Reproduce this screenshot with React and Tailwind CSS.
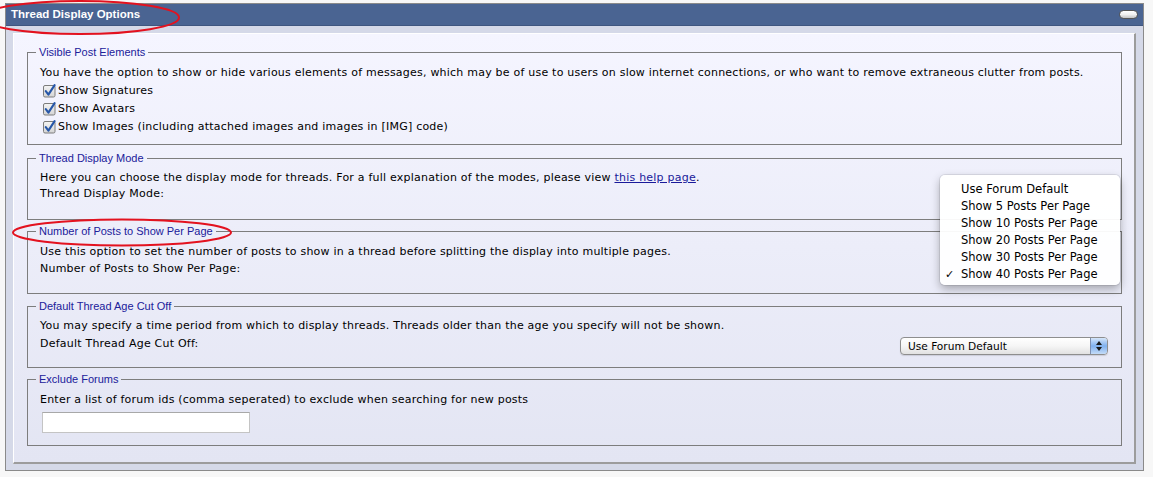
import React from "react";

const Checkbox = () => (
  <svg width="14" height="14" viewBox="0 0 14 14" className="shrink-0">
    <defs>
      <linearGradient id="cbg" x1="0" y1="0" x2="0" y2="1">
        <stop offset="0" stopColor="#f4f4f4" />
        <stop offset="1" stopColor="#d4d4d4" />
      </linearGradient>
    </defs>
    <rect x="0.5" y="1.5" width="11.5" height="11.5" rx="1.5" fill="url(#cbg)" stroke="#7c7c7c" />
    <path d="M2.8 7.2 L5.4 10.6 L11.6 1.2" fill="none" stroke="#2656a8" strokeWidth="2.1" strokeLinecap="round" strokeLinejoin="round" />
  </svg>
);

const Fieldset = ({ legend, className, children }) => (
  <fieldset className={`border border-[#7d7d7d] ${className}`}>
    <legend className="ml-[8px] px-[3px] text-[11px] leading-[13px] tracking-normal text-[#20209a] font-['Liberation_Sans',Arial,sans-serif]">
      {legend}
    </legend>
    <div className="px-[12px]">{children}</div>
  </fieldset>
);

const Row = ({ children }) => (
  <div className="flex items-center h-[18px] pl-[3px] gap-[1px]">
    <Checkbox />
    <span>{children}</span>
  </div>
);

const menuItems = [
  "Use Forum Default",
  "Show 5 Posts Per Page",
  "Show 10 Posts Per Page",
  "Show 20 Posts Per Page",
  "Show 30 Posts Per Page",
  "Show 40 Posts Per Page",
];

export default function App() {
  return (
    <div className="w-[1153px] h-[477px] bg-[#f7f7f7] relative overflow-hidden pt-[3px] pl-[5px] font-['DejaVu_Sans',Verdana,sans-serif] text-[11px] tracking-[0.22px] text-black">
      <div className="w-[1139px] h-[468px] border border-[#8a8a8a] bg-[#d5d9e8] flex flex-col">
        {/* header */}
        <div className="h-[22px] shrink-0 bg-[#4a6492] border-b border-[#3f5680] flex items-center justify-between pl-[5px] pr-[5px]">
          <span className="text-white font-bold text-[11.5px] tracking-normal font-['Liberation_Sans',Arial,sans-serif]">
            Thread Display Options
          </span>
          <div className="w-[19px] h-[9px] rounded-full border border-[#555] bg-gradient-to-b from-white via-[#f0f0f0] to-[#c4c4c4]" />
        </div>
        {/* body */}
        <div className="flex-1 pt-[7px] px-[7px] pb-[6px]">
          <div className="h-full border-t border-l border-white border-r-2 border-b-2 border-r-[#9c9c9c] border-b-[#9c9c9c] bg-gradient-to-b from-[#f5f5ff] to-[#e3e5f3] pt-[12px] pl-[13px] pr-[12px]">
            <Fieldset legend="Visible Post Elements" className="h-[99px]">
              <div className="pt-[5px] leading-[18px]">
                You have the option to show or hide various elements of messages, which may be of use to users on slow internet connections, or who want to remove extraneous clutter from posts.
              </div>
              <Row>Show Signatures</Row>
              <Row>Show Avatars</Row>
              <Row>Show Images (including attached images and images in [IMG] code)</Row>
            </Fieldset>

            <Fieldset legend="Thread Display Mode" className="h-[68px] mt-[7px]">
              <div className="pt-[5px] leading-[16px]">
                Here you can choose the display mode for threads. For a full explanation of the modes, please view{" "}
                <a href="#" className="text-[#1a1a9a] underline">this help page</a>.
              </div>
              <div className="leading-[16px]">Thread Display Mode:</div>
            </Fieldset>

            <Fieldset legend="Number of Posts to Show Per Page" className="h-[69px] mt-[5px]">
              <div className="pt-[6px] leading-[16px]">
                Use this option to set the number of posts to show in a thread before splitting the display into multiple pages.
              </div>
              <div className="leading-[16px] pt-[1px]">Number of Posts to Show Per Page:</div>
            </Fieldset>

            <Fieldset legend="Default Thread Age Cut Off" className="h-[68px] mt-[6px]">
              <div className="pt-[5px] leading-[16px]">
                You may specify a time period from which to display threads. Threads older than the age you specify will not be shown.
              </div>
              <div className="flex justify-between items-start mt-[2px]">
                <span className="leading-[16px]">Default Thread Age Cut Off:</span>
                <div className="mt-[1px] mr-[1px] w-[208px] h-[18px] rounded-[4px] border border-[#8e8e8e] bg-gradient-to-b from-white via-[#f6f6f6] to-[#e2e2e2] flex items-stretch overflow-hidden shadow-[0_1px_1px_rgba(0,0,0,0.12)]">
                  <div className="flex-1 pl-[7px] text-[10.6px] tracking-normal leading-[16px]">Use Forum Default</div>
                  <div className="w-[17px] border-l border-[#7d8fb0] bg-gradient-to-b from-[#d6e6fa] via-[#7fb0ee] to-[#c4dcf8] flex flex-col items-center justify-center gap-[2px]">
                    <svg width="6" height="4" viewBox="0 0 6 4"><path d="M3 0 L6 4 L0 4 Z" fill="#1a1a1a" /></svg>
                    <svg width="6" height="4" viewBox="0 0 6 4"><path d="M0 0 L6 0 L3 4 Z" fill="#1a1a1a" /></svg>
                  </div>
                </div>
              </div>
            </Fieldset>

            <Fieldset legend="Exclude Forums" className="h-[73px] mt-[5px]">
              <div className="pt-[6px] leading-[16px]">
                Enter a list of forum ids (comma seperated) to exclude when searching for new posts
              </div>
              <input
                type="text"
                className="block mt-[4px] ml-[2px] w-[208px] h-[21px] bg-white border border-[#c4c4c4] border-t-[#a8a8a8] outline-none"
              />
            </Fieldset>
          </div>
        </div>
      </div>

      {/* open popup menu */}
      <div className="absolute left-[940px] top-[175px] w-[180px] h-[110px] bg-white/95 rounded-[5px] shadow-[0_0_0_1px_rgba(0,0,0,0.08),0_4px_10px_rgba(0,0,0,0.3)] pt-[6px] pb-[2px] text-[11.5px] tracking-normal">
        {menuItems.map((item, i) => (
          <div key={item} className="relative h-[17px] leading-[17px] pl-[21px]">
            {i === menuItems.length - 1 && (
              <span className="absolute left-[5px] top-0 text-[11px]">✓</span>
            )}
            {item}
          </div>
        ))}
      </div>

      {/* red annotation marks */}
      <svg className="absolute left-0 top-0 pointer-events-none" width="1153" height="477">
        <ellipse cx="80" cy="17.5" rx="99" ry="16.5" fill="none" stroke="#e3121f" strokeWidth="2" />
        <ellipse cx="122" cy="232.5" rx="109" ry="13" fill="none" stroke="#e3121f" strokeWidth="2" />
      </svg>
    </div>
  );
}
